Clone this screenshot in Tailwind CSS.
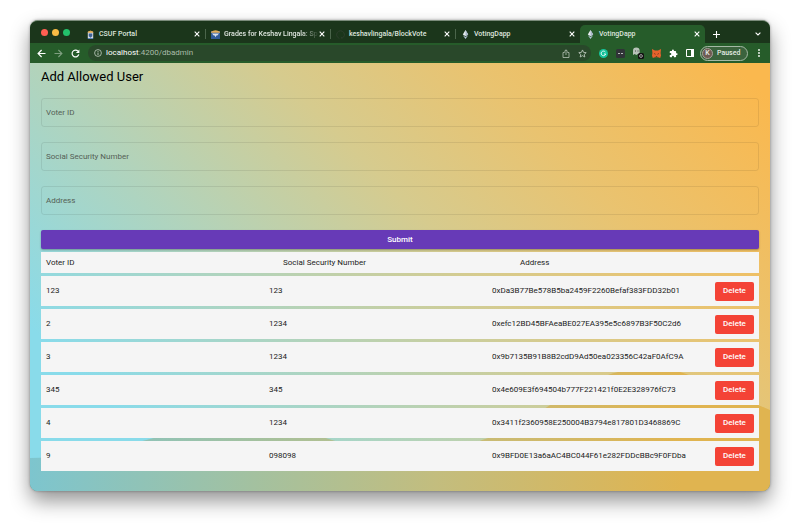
<!DOCTYPE html>
<html lang="en">
<head>
<meta charset="utf-8">
<meta name="viewport" content="width=device-width, initial-scale=1">
<title>VotingDapp</title>
<script src="https://cdn.jsdelivr.net/npm/@tailwindcss/browser@4"></script>
</head>
<body class="bg-white px-[30px] pt-5 pb-10 font-[Roboto,sans-serif] text-black">
<svg class="hidden" aria-hidden="true">
  <symbol id="close" viewBox="0 0 6 6"><path d="M.7.7l4.6 4.6M5.3.7L.7 5.3" stroke="#fff" stroke-width="1.1" fill="none"/></symbol>
  <symbol id="eth" viewBox="0 0 10 10"><path d="M5 0L2 5l3 2 3-2z" fill="#e9eef2"/><path d="M5 0v7l3-2z" fill="#a9b8c9"/><path d="M2 5.9L5 10l3-4.1-3 1.8z" fill="#b7c7dc"/></symbol>
</svg>
<div class="overflow-hidden rounded-lg border-t border-[#7b8c7b] bg-[#265c2a] shadow-[0_10px_20px_rgba(0,0,0,0.42),0_0_3px_rgba(0,0,0,0.35)]">
  <header>
    <div class="flex h-[22px] items-stretch bg-[#1b361b] text-[7px] font-medium text-[#dfe6df]">
      <div class="flex w-[50px] shrink-0 items-center gap-1 pl-[11px]">
        <span class="size-[7px] rounded-full bg-[#ff5f52]"></span>
        <span class="size-[7px] rounded-full bg-[#f8bb44]"></span>
        <span class="size-[7px] rounded-full bg-[#23c26b]"></span>
      </div>
      <nav class="flex min-w-0 flex-1 items-stretch pt-1" aria-label="Tabs">
        <div class="flex min-w-0 max-w-[125px] flex-1 items-center pr-[5px] pl-1.5">
          <svg class="mr-1 size-[9px] shrink-0" viewBox="0 0 10 10"><path d="M2 2.5Q5-1 8 2.5V9H2z" fill="#d8dde3"/><path d="M2 2Q5-.5 8 2v1H2z" fill="#e0a951"/><path d="M3 4h4v3L5 8.500 3 7z" fill="#3b6197"/><path d="M2 9h6v1H2z" fill="#5c86b8"/></svg>
          <a href="#" class="min-w-0 flex-1 whitespace-nowrap">CSUF Portal</a>
          <button aria-label="Close CSUF Portal" class="shrink-0"><svg class="size-[6px]"><use href="#close"/></svg></button>
        </div>
        <div class="my-1 w-px -mr-px bg-[#4b654b]"></div>
        <div class="flex min-w-0 max-w-[125px] flex-1 items-center pr-[5px] pl-1.5">
          <svg class="mr-1 size-[9px] shrink-0" viewBox="0 0 10 10"><path d="M0 1h10v9H0z" fill="#315b98"/><path d="M0 2Q5-1.500 10 2v1H0z" fill="#e3ad57"/><path d="M1 4h8L7 6H6L5 8 4 6H3z" fill="#d7e0ec"/></svg>
          <a href="#" class="min-w-0 flex-1 whitespace-nowrap [mask-image:linear-gradient(to_right,black_82%,transparent)]">Grades for Keshav Lingala: Sp</a>
          <button aria-label="Close Grades" class="shrink-0"><svg class="size-[6px]"><use href="#close"/></svg></button>
        </div>
        <div class="my-1 w-px -mr-px bg-[#4b654b]"></div>
        <div class="flex min-w-0 max-w-[125px] flex-1 items-center pr-[5px] pl-1.5">
          <svg class="mr-1 size-[9px] shrink-0" viewBox="0 0 10 10"><path d="M3.700 9.300A4.300 4.300 0 1 1 6.300 9.300V7.800" stroke="#30402f" stroke-width="1" fill="none"/></svg>
          <a href="#" class="min-w-0 flex-1 whitespace-nowrap">keshavlingala/BlockVote</a>
          <button aria-label="Close BlockVote" class="shrink-0"><svg class="size-[6px]"><use href="#close"/></svg></button>
        </div>
        <div class="my-1 w-px -mr-px bg-[#4b654b]"></div>
        <div class="flex min-w-0 max-w-[125px] flex-1 items-center pr-[5px] pl-1.5">
          <svg class="mr-1 size-[9px] shrink-0"><use href="#eth"/></svg>
          <a href="#" class="min-w-0 flex-1 whitespace-nowrap">VotingDapp</a>
          <button aria-label="Close VotingDapp" class="shrink-0"><svg class="size-[6px]"><use href="#close"/></svg></button>
        </div>
        <div class="flex min-w-0 max-w-[125px] flex-1 items-center rounded-t-[5px] bg-[#265c2a] pr-[5px] pl-1.5">
          <svg class="mr-1 size-[9px] shrink-0"><use href="#eth"/></svg>
          <a href="#" aria-current="page" class="min-w-0 flex-1 whitespace-nowrap">VotingDapp</a>
          <button aria-label="Close current tab" class="shrink-0"><svg class="size-[6px]"><use href="#close"/></svg></button>
        </div>
        <button aria-label="New tab" class="ml-2 shrink-0"><svg class="size-[7px]" viewBox="0 0 7 7"><path d="M3.500 0v7M0 3.500h7" stroke="#fff" stroke-width="1.100"/></svg></button>
      </nav>
      <button aria-label="Search tabs" class="w-6 shrink-0 pt-1"><svg class="mx-auto h-1 w-[6px]" viewBox="0 0 6 4"><path d="M.6.6L3 3 5.400.6" stroke="#fff" stroke-width="1.100" fill="none"/></svg></button>
    </div>
    <div class="flex h-5 items-center bg-[#265c2a] pl-[7px]">
      <button aria-label="Back" class="mr-2 shrink-0"><svg class="size-[9px]" viewBox="0 0 9 9"><path d="M8.500 4.500H1.200M4.600 1L1.100 4.500 4.600 8" stroke="#fff" stroke-width="1.200" fill="none"/></svg></button>
      <button aria-label="Forward" class="mr-2 shrink-0"><svg class="size-[9px]" viewBox="0 0 9 9"><path d="M.5 4.500h7.300M4.400 1l3.500 3.500L4.400 8" stroke="#7f9f80" stroke-width="1.100" fill="none"/></svg></button>
      <button aria-label="Reload" class="mr-2 shrink-0"><svg class="size-[9px]" viewBox="0 0 9 9"><path d="M7.800 5.400A3.400 3.400 0 1 1 7 2.200" stroke="#fff" stroke-width="1.200" fill="none"/><path d="M8.400.4v3.500H4.900z" fill="#fff"/></svg></button>
      <div class="mr-2 flex h-4 min-w-0 flex-1 items-center rounded-full bg-[#29482a] pr-1 pl-1.5">
        <svg class="mr-1 size-2 shrink-0" viewBox="0 0 8 8"><circle cx="4" cy="4" r="3.400" stroke="#c3cfc3" stroke-width=".8" fill="none"/><path d="M4 3.500V6M4 2v.9" stroke="#c3cfc3" stroke-width=".9"/></svg>
        <a href="#" class="flex-1 text-[8px] leading-4 text-[#a9bca9]"><span class="text-white">localhost</span>:4200/dbadmin</a>
        <button aria-label="Share" class="mr-2"><svg class="h-[9px] w-2" viewBox="0 0 8 9"><path d="M2.700 3.500H1v5h6v-5H5.300M4 6V.9M2.200 2.500L4 .8l1.800 1.700" stroke="#b5c4b5" stroke-width=".8" fill="none"/></svg></button>
        <button aria-label="Bookmark"><svg class="size-[9px]" viewBox="0 0 24 24"><path d="M12 2.500l2.900 6.500 7 .7-5.300 4.700 1.600 7-6.200-3.700-6.200 3.700 1.600-7L2.100 9.700l7-.7z" stroke="#c3cfc3" stroke-width="2.200" fill="none"/></svg></button>
      </div>
      <div class="flex shrink-0 items-center gap-2">
        <svg class="size-[9px]" viewBox="0 0 9 9"><circle cx="4.500" cy="4.500" r="4.500" fill="#15c39a"/><path d="M6.300 3A2.300 2.300 0 1 0 6.700 5H5" stroke="#fff" stroke-width=".9" fill="none"/></svg>
        <svg class="size-[9px]" viewBox="0 0 9 9"><rect width="9" height="9" rx="1.500" fill="#303437"/><path d="M2 4.500h2M5 4.500h2" stroke="#b9bdbd" stroke-width="1"/></svg>
        <svg class="h-3 w-[11px]" viewBox="0 0 11 12"><path d="M0 8V3.800a3.300 3.300 0 0 1 6.600 0V8L5 7 3.300 8 1.700 7z" fill="#b7c3b8"/><path d="M2 4h1M4.500 4h1" stroke="#444" stroke-width="1"/><rect x="5" y="6" width="6" height="6" rx="1.500" fill="#111"/><circle cx="8" cy="9" r="1.400" stroke="#ddd" stroke-width=".7" fill="none"/></svg>
        <svg class="size-[9px]" viewBox="0 0 9 9"><path d="M0 0L3 1.500h3L9 0 8.600 4 9 6.500 8.200 9 6 8.300H3L.8 9 0 6.500.4 4z" fill="#e8622c"/><path d="M2.200 4.500l1.300.8M6.800 4.500l-1.300.8M3.800 7.500h1.400" stroke="#5a3320" stroke-width=".8"/></svg>
        <svg class="size-[9px]" viewBox="0 0 24 24"><path d="M20.500 11H19V7a2 2 0 0 0-2-2h-4V3.500a2.500 2.500 0 0 0-5 0V5H4a2 2 0 0 0-2 2v3.800h1.500a2.700 2.700 0 0 1 0 5.400H2V20a2 2 0 0 0 2 2h3.800v-1.500a2.700 2.700 0 0 1 5.400 0V22H17a2 2 0 0 0 2-2v-4h1.500a2.500 2.500 0 0 0 0-5z" fill="#fff"/></svg>
        <svg class="size-2" viewBox="0 0 8 8"><path d="M.5.5h7v7h-7z" fill="none" stroke="#fff" stroke-width="1"/><path d="M5 0h3v8H5z" fill="#fff"/></svg>
      </div>
      <button class="ml-1.5 flex h-[15px] w-12 shrink-0 items-center rounded-full border border-[#a5b8a5] bg-[#3b633d] pl-px text-[7px] font-medium text-[#e4ebe4]"><span class="mr-1 flex size-[11px] items-center justify-center rounded-full border border-[#a7a09b] bg-[#6f5a52]">K</span>Paused</button>
      <button aria-label="Menu" class="w-[22px] shrink-0"><svg class="mx-auto h-2 w-0.5" viewBox="0 0 2 8"><circle cx="1" cy="1" r=".9" fill="#fff"/><circle cx="1" cy="4" r=".9" fill="#fff"/><circle cx="1" cy="7" r=".9" fill="#fff"/></svg></button>
    </div>
  </header>
  <main class="relative isolate bg-[linear-gradient(45deg,#89dbea_0%,#89dbea_14%,#b3d3ba_37%,#d6cb8e_57%,#e9c370_74%,#fab84e_97%)] px-[11px] pt-1.5 pb-5">
    <svg class="absolute inset-x-0 bottom-0 -z-10 h-[120px] w-full" viewBox="0 0 740 120" preserveAspectRatio="none" aria-hidden="true">
      <defs><linearGradient id="wave"><stop offset="0" stop-color="#7dc5ce"/><stop offset=".3" stop-color="#a3c1a0"/><stop offset=".55" stop-color="#c3bd7e"/><stop offset=".88" stop-color="#e0b450"/></linearGradient></defs>
      <path d="M0 87C50 86 90 76 120 68C180 50 260 54 302 69C360 88 420 86 452 69C480 60 500 47 517 36C560 8 590-4 625-4C650-4 690 18 740 39V120H0z" fill="url(#wave)"/>
    </svg>
    <h1 class="text-[13px] leading-4">Add Allowed User</h1>
    <form class="mt-[13px]">
      <div class="flex flex-col gap-[15px]">
        <div class="relative">
          <label for="voter" class="absolute left-[5px] top-[10px] text-[8px] leading-[10px] text-[#555f56]">Voter ID</label>
          <input id="voter" class="block h-[29px] w-full rounded-[3px] border border-black/8 bg-transparent px-[5px] text-[8px] outline-none">
        </div>
        <div class="relative">
          <label for="ssn" class="absolute left-[5px] top-[10px] text-[8px] leading-[10px] text-[#555f56]">Social Security Number</label>
          <input id="ssn" class="block h-[29px] w-full rounded-[3px] border border-black/8 bg-transparent px-[5px] text-[8px] outline-none">
        </div>
        <div class="relative">
          <label for="addr" class="absolute left-[5px] top-[10px] text-[8px] leading-[10px] text-[#555f56]">Address</label>
          <input id="addr" class="block h-[29px] w-full rounded-[3px] border border-black/8 bg-transparent px-[5px] text-[8px] outline-none">
        </div>
      </div>
      <button type="button" class="mt-[15px] block h-[19px] w-full rounded-[2px] bg-[#673ab7] text-[8px] font-medium text-white shadow-[0_1px_2px_rgba(0,0,0,0.3)]">Submit</button>
    </form>
    <table class="mt-[3px] block text-[8px] leading-[10px] text-[#1c1c1c]">
      <thead class="block">
        <tr class="flex h-[21px] items-center bg-[#f5f5f5] pr-0.5 pl-[5px]"><th class="flex-1 text-left font-normal">Voter ID</th><th class="flex-1 text-left font-normal">Social Security Number</th><th class="flex-1 text-left font-normal">Address</th></tr>
      </thead>
      <tbody class="mt-[3px] flex flex-col gap-[3px]">
        <tr class="flex h-[30px] items-center bg-[#f5f5f5] px-[5px]"><td class="flex-1">123</td><td class="flex-1">123</td><td class="flex-1">0xDa3B77Be578B5ba2459F2260Befaf383FDD32b01</td><td><button class="block h-[19px] w-[39px] rounded-[2px] bg-[#f44336] font-medium text-white">Delete</button></td></tr>
        <tr class="flex h-[30px] items-center bg-[#f5f5f5] px-[5px]"><td class="flex-1">2</td><td class="flex-1">1234</td><td class="flex-1">0xefc12BD45BFAeaBE027EA395e5c6897B3F50C2d6</td><td><button class="block h-[19px] w-[39px] rounded-[2px] bg-[#f44336] font-medium text-white">Delete</button></td></tr>
        <tr class="flex h-[30px] items-center bg-[#f5f5f5] px-[5px]"><td class="flex-1">3</td><td class="flex-1">1234</td><td class="flex-1">0x9b7135B91B8B2cdD9Ad50ea023356C42aF0AfC9A</td><td><button class="block h-[19px] w-[39px] rounded-[2px] bg-[#f44336] font-medium text-white">Delete</button></td></tr>
        <tr class="flex h-[30px] items-center bg-[#f5f5f5] px-[5px]"><td class="flex-1">345</td><td class="flex-1">345</td><td class="flex-1">0x4e609E3f694504b777F221421f0E2E328976fC73</td><td><button class="block h-[19px] w-[39px] rounded-[2px] bg-[#f44336] font-medium text-white">Delete</button></td></tr>
        <tr class="flex h-[30px] items-center bg-[#f5f5f5] px-[5px]"><td class="flex-1">4</td><td class="flex-1">1234</td><td class="flex-1">0x3411f2360958E250004B3794e817801D3468869C</td><td><button class="block h-[19px] w-[39px] rounded-[2px] bg-[#f44336] font-medium text-white">Delete</button></td></tr>
        <tr class="flex h-[30px] items-center bg-[#f5f5f5] px-[5px]"><td class="flex-1">9</td><td class="flex-1">098098</td><td class="flex-1">0x9BFD0E13a6aAC4BC044F61e282FDDcBBc9F0FDba</td><td><button class="block h-[19px] w-[39px] rounded-[2px] bg-[#f44336] font-medium text-white">Delete</button></td></tr>
      </tbody>
    </table>
  </main>
</div>
</body>
</html>
